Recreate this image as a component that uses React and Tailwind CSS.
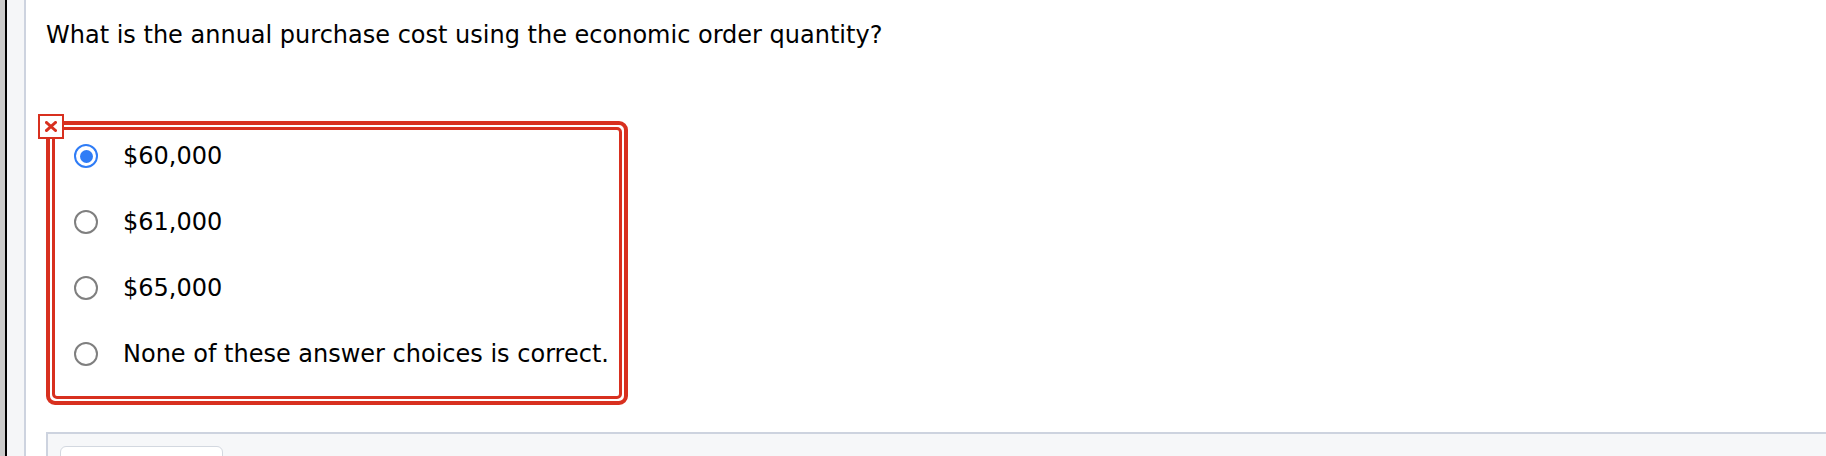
import React from 'react';

const options = [
  { label: '$60,000', checked: true },
  { label: '$61,000', checked: false },
  { label: '$65,000', checked: false },
  { label: 'None of these answer choices is correct.', checked: false },
];

const Radio = ({ checked }) =>
  checked ? (
    <span className="flex h-[24px] w-[24px] shrink-0 items-center justify-center rounded-full border-[2.5px] border-[#2f7cf6] bg-white">
      <span className="h-[13px] w-[13px] rounded-full bg-[#2f7cf6]"></span>
    </span>
  ) : (
    <span className="block h-[24px] w-[24px] shrink-0 rounded-full border-2 border-[#7f7f7f] bg-white"></span>
  );

export default function App() {
  return (
    <div
      className="flex h-[456px] w-full overflow-hidden bg-white text-black"
      style={{ fontFamily: '"DejaVu Sans", Verdana, sans-serif' }}
    >
      {/* left chrome */}
      <div className="w-[5px] shrink-0 bg-[#cbcbcb]"></div>
      <div className="w-[2px] shrink-0 bg-black"></div>
      <div className="w-[19px] shrink-0 border-r-2 border-[#cdd3df] bg-[#f5f6f8]"></div>

      <div className="flex flex-1 flex-col">
        <div className="pl-[20px] pt-[20px]">
          <p className="text-[24px] leading-[30px]">What is the annual purchase cost using the economic order quantity?</p>

          {/* answer box */}
          <div className="relative mt-[71px] w-[582px] rounded-[9px] border-4 border-[#d8301f] p-[2px]">
            <div className="absolute left-[-12px] top-[-11px] flex h-[25px] w-[26px] items-center justify-center border-2 border-[#d8301f] bg-white">
              <svg width="12" height="11" viewBox="0 0 12 11">
                <path d="M1.5 1.5 L10.5 9.5 M10.5 1.5 L1.5 9.5" stroke="#d8301f" strokeWidth="3" strokeLinecap="square" />
              </svg>
            </div>
            <div className="flex flex-col gap-[36px] rounded-[5px] border-[3px] border-[#d8301f] pb-[27px] pl-[19px] pr-[8px] pt-[11px]">
              {options.map((o) => (
                <label key={o.label} className="flex h-[30px] items-center gap-[25px] whitespace-nowrap">
                  <Radio checked={o.checked} />
                  <span className="text-[24px] leading-[30px]">{o.label}</span>
                </label>
              ))}
            </div>
          </div>
        </div>

        {/* footer panel */}
        <div className="ml-[20px] mt-[27px] flex-1 border-l-2 border-t-2 border-[#cdd3df] bg-[#f6f7f9] pl-[12px] pt-[12px]">
          <div className="h-[44px] w-[163px] rounded-[6px] border border-[#d3d8e0] bg-white"></div>
        </div>
      </div>
    </div>
  );
}
